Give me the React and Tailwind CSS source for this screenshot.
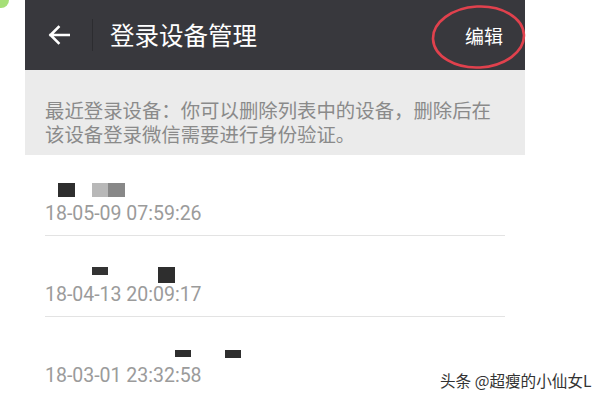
import React from "react";

const cjk = { fontFamily: '"Noto Sans CJK SC", "Noto Sans", sans-serif' };
const num = { fontFamily: 'Roboto, "Noto Sans", sans-serif' };

function Row({ time, boxes, last }) {
  return (
    <div className={`h-[81px] mx-[20px] flex flex-col ${last ? "" : "border-b border-[#e3e3e3]"}`}>
      <div className="relative h-[23px] mt-[24px]">
        {boxes.map((b, i) => (
          <div
            key={i}
            className="absolute"
            style={{ left: b[0], top: b[1], width: b[2], height: b[3], background: b[4] }}
          />
        ))}
      </div>
      <div className="h-[24px] leading-[24px] text-[19.5px] text-[#9b9b9b]" style={num}>
        {time}
      </div>
    </div>
  );
}

export default function App() {
  return (
    <div className="relative w-[600px] h-[400px] bg-white overflow-hidden">
      <div className="absolute left-0 top-0 w-[9px] h-[8px] bg-[#a6df78] rounded-br-[9px]" />
      <div className="ml-[25px] w-[500px]">
        <div className="relative h-[70px] bg-[#38383d] flex items-center">
          <svg className="ml-[23px]" width="22" height="20" viewBox="0 0 22 20" fill="none">
            <path d="M21 10H2.5M10.5 2L2.5 10L10.5 18" stroke="white" strokeWidth="2.6" strokeLinecap="square" />
          </svg>
          <div className="ml-[22px] w-px h-[32px] bg-[#2c2c30]" />
          <div className="ml-[17px] text-[24.5px] text-white leading-none" style={cjk}>
            登录设备管理
          </div>
          <div className="ml-auto mr-[22px] text-[19px] text-white leading-none" style={cjk}>
            编辑
          </div>
          <svg className="absolute left-[406px] top-[4px]" width="95" height="66" viewBox="0 0 95 66" fill="none">
            <ellipse cx="47.5" cy="33" rx="45.5" ry="30.5" stroke="#e0414d" strokeWidth="2.6" transform="rotate(-3 47.5 33)" />
          </svg>
        </div>
        <div className="h-[85px] bg-[#ebebeb] px-[20px] pt-[28px] text-[19.4px] leading-[24px] text-[#8a8a8a]" style={cjk}>
          <div>最近登录设备：你可以删除列表中的设备，删除后在</div>
          <div>该设备登录微信需要进行身份验证。</div>
        </div>
        <Row
          time="18-05-09 07:59:26"
          boxes={[
            [13, 4, 17, 14, "#2e2e2e"],
            [47, 4, 16, 14, "#b8b8b8"],
            [63, 4, 17, 14, "#888888"],
          ]}
        />
        <Row
          time="18-04-13 20:09:17"
          boxes={[
            [47, 7, 16, 8, "#333333"],
            [113, 7, 17, 16, "#2e2e2e"],
          ]}
        />
        <Row
          time="18-03-01 23:32:58"
          last
          boxes={[
            [130, 9, 16, 7, "#2e2e2e"],
            [180, 9, 16, 8, "#2e2e2e"],
          ]}
        />
      </div>
      <div
        className="absolute left-[440px] top-[369px] text-[15.6px] text-[#333333] leading-[22px]"
        style={{ ...cjk, textShadow: "0 0 2px #fff, 0 0 2px #fff" }}
      >
        头条 @超瘦的小仙女L
      </div>
    </div>
  );
}
